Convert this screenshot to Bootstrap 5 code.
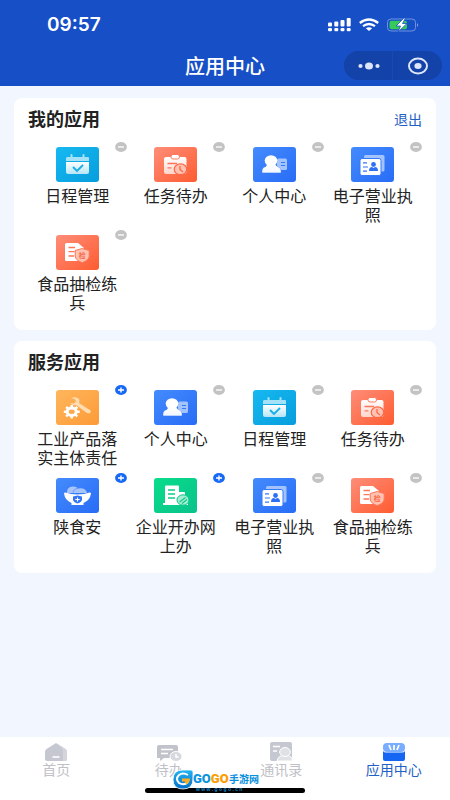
<!DOCTYPE html>
<html lang="zh-CN">
<head>
<meta charset="utf-8">
<meta name="viewport" content="width=device-width, initial-scale=1">
<title>应用中心</title>
<link href="https://cdn.jsdelivr.net/npm/bootstrap@5.3.0/dist/css/bootstrap.min.css" rel="stylesheet">
<style>
body{font-family:"Liberation Sans","Noto Sans CJK SC",sans-serif;background:#f2f6ff;color:#222}
.top-area{background:#174fc7;color:#fff;height:86px}
.status-row{padding:13px 31px 0 47px;height:37px}
.clock-text{font-family:Inter,sans-serif;font-size:19px;line-height:24px;font-weight:600}
.title-row{height:30px;margin-top:14px}
.page-title{font-size:20px;line-height:32px;font-weight:500}
.capsule{right:8px;top:0;width:98px;height:29px;background:#1342a9;border-radius:15px}
.capsule button{color:#dce5fb}
.capsule button+button{box-shadow:-1px 0 #174ab8}
.cards-wrap{padding:12px 14px;gap:11px}
.panel{border-radius:8px;padding:10px 14px 17px}
.panel-head{height:24px;margin-bottom:15px}
.panel-title{font-size:18px;line-height:24px;font-weight:700}
.exit-btn{font-size:14px;line-height:20px;color:#1f62c4}
.app-grid{row-gap:10px}
.app-link{padding:0 8px;color:#222}
.app-link svg{width:43px;height:35px}
.app-label{font-size:16px;line-height:19px;margin-top:5px}
.toggle-btn{top:-5px;right:0;width:12px;height:10px}
.toggle-btn svg{width:12px;height:10px}
.tab-bar{height:63px;padding-top:5px}
.tab-bar a{font-size:14px;line-height:16px;color:#c0c1c7}
.tab-bar a.active{color:#1f62c4}
.tab-bar svg{width:24px;height:20px}
.home-line{left:50%;bottom:7px;width:160px;height:5px;margin-left:-80px;background:#000}
.brand-mark{left:50%;bottom:8px;margin-left:-53px}
.brand-mark svg{width:88px;height:23px}
</style>
</head>
<body>
<svg class="position-absolute" width="0" height="0" aria-hidden="true">
  <defs>
    <linearGradient id="gCyan" x2="1" y2="1"><stop stop-color="#16b9f1"/><stop offset="1" stop-color="#079ddd"/></linearGradient>
    <linearGradient id="gRed" x2="1" y2="1"><stop stop-color="#ff8d79"/><stop offset="1" stop-color="#fe5c30"/></linearGradient>
    <linearGradient id="gBlue" x2="1" y2="1"><stop stop-color="#448bfd"/><stop offset="1" stop-color="#286cf6"/></linearGradient>
    <linearGradient id="gOrange" x2="1" y2="1"><stop stop-color="#ffb65c"/><stop offset="1" stop-color="#fd9a37"/></linearGradient>
    <linearGradient id="gGreen" x2="1" y2="1"><stop stop-color="#08dd8b"/><stop offset="1" stop-color="#0ac28b"/></linearGradient>
    <linearGradient id="gWhite" x2="0" y2="1"><stop stop-color="#fff"/><stop offset="1" stop-color="#fff" stop-opacity=".7"/></linearGradient>
    <linearGradient id="gLogo" x2="0" y2="1"><stop stop-color="#22b4f2"/><stop offset="1" stop-color="#0670c7"/></linearGradient>
    <linearGradient id="gGold" x2="0" y2="1"><stop stop-color="#ffc400"/><stop offset="1" stop-color="#ff7b00"/></linearGradient>
  </defs>
  <symbol id="calendar" viewBox="0 0 43 35">
    <rect width="43" height="35" rx="3" fill="url(#gCyan)"/>
    <path d="M12 10h20q1 0 1 1v3H10v-3q0-1 2-1Z" fill="#a5e2f8"/>
    <path d="M15.500 8v4M27.500 8v4" stroke="#a5e2f8" stroke-width="2" stroke-linecap="round"/>
    <path d="M10 15h23v10q0 2-2 2H12q-2 0-2-2Z" fill="url(#gWhite)"/>
    <path d="m17 20 4 4 6-6" fill="none" stroke="#17aee6" stroke-width="1.800"/>
  </symbol>
  <symbol id="task" viewBox="0 0 43 35">
    <rect width="43" height="35" rx="3" fill="url(#gRed)"/>
    <rect x="10" y="10" width="22.500" height="17" rx="2" fill="url(#gWhite)"/>
    <rect x="17" y="7.500" width="8.500" height="4.500" rx="2" fill="#fff" stroke="#fe7b60"/>
    <path d="M13.500 16.500H23M13.500 20.800h4" stroke="#fe7657" stroke-width="1.300"/>
    <ellipse cx="26.500" cy="22.300" rx="6.300" ry="5.400" fill="#ffc2b3" stroke="#fe6743" stroke-width="1.200"/>
    <path d="M26 19v3.500l3 2.500" fill="none" stroke="#fe6743" stroke-width="1.300"/>
  </symbol>
  <symbol id="person" viewBox="0 0 43 35">
    <rect width="43" height="35" rx="3" fill="url(#gBlue)"/>
    <rect x="24" y="11.500" width="10" height="11.500" rx="1.500" fill="#a3c3fd"/>
    <path d="M28 15.500h4M28 18.500h4" stroke="#3476f7"/>
    <path d="M14 17h8q1 2 3 3 3 1 3 5v1H9q0-5 3-6 2-1 2-3Z" fill="#d5e3ff" stroke="#367af9" stroke-width=".8"/>
    <ellipse cx="18" cy="13.600" rx="6.300" ry="5.400" fill="#fff"/>
    <path d="M14 17q4 3 8 0 1 3 4 3.500 2 1 2 5H9q0-4 2-5 3-.5 3-3.500Z" fill="url(#gWhite)"/>
  </symbol>
  <symbol id="license" viewBox="0 0 43 35">
    <rect width="43" height="35" rx="3" fill="url(#gBlue)"/>
    <rect x="13" y="8" width="20.500" height="16.500" rx="1.500" fill="#a3c3fd"/>
    <rect x="9" y="11.500" width="21" height="17" rx="2" fill="#fff" stroke="#357af9"/>
    <path d="M12 15.800h4M12 20h5M12 24.200h4" stroke="#3476f7" stroke-width="1.200"/>
    <circle cx="22.500" cy="17.500" r="2.400" fill="#2d70f4"/><path d="M18 24q0-4 3-4l1.500 1 1.500-1q3 0 3 4Z" fill="#2d70f4"/>
  </symbol>
  <symbol id="inspect" viewBox="0 0 43 35">
    <rect width="43" height="35" rx="3" fill="url(#gRed)"/>
    <path d="M10.500 8H22l6 5v13H10.500Q9 26 9 24.500v-15Q9 8 10.500 8Z" fill="#fff"/>
    <path d="M12.500 12.500H19M12.500 16.700h6M12.500 21H18" stroke="#fe7657" stroke-width="1.300"/>
    <path d="m26.200 13.500 7 2v5.500q0 4-7 6.700-7-2.700-7-6.700v-5.500Z" fill="#ffc2b3" stroke="#fe7455"/>
    <text x="26.200" y="23" font-size="7" font-weight="700" text-anchor="middle" fill="#f96845">检</text>
  </symbol>
  <symbol id="tools" viewBox="0 0 43 35">
    <rect width="43" height="35" rx="3" fill="url(#gOrange)"/>
    <path d="M15 8q5-2 8 1 1 2 0 4l11.500 7.500q1 2-1 3L31 23l-11-8q-4 1-6-2l4 .5 2-2.500-1.500-2Z" fill="#ffdcb2"/>
    <ellipse cx="15.700" cy="21.700" rx="4.500" ry="3.700" fill="none" stroke="#fff" stroke-width="3"/>
    <path d="M15.700 15v3M15.700 25.500v3M7.800 21.700h3M20.700 21.700h3M10.100 17l2 1.700M19.300 24.700l2 1.700M21.300 17l-2 1.700M12.100 24.700l-2 1.700" stroke="#fff" stroke-width="2.400"/>
  </symbol>
  <symbol id="bowl" viewBox="0 0 43 35">
    <rect width="43" height="35" rx="3" fill="url(#gBlue)"/>
    <path d="M11 14q0-5 5.500-5.500Q20 8 22 10.500q8-1 9 4.500H11Z" fill="#a7c4fb"/>
    <path d="M17 14.500q0-3.500 6-4.500" fill="none" stroke="#5b92f8" stroke-width=".8"/>
    <path d="M8 15.500q0-1 1.500-1 5 2 12 2t12-2q1.500 0 1.500 1-1 7-7.500 9.500V27h-12v-2Q9 22.500 8 15.500Z" fill="#fff"/>
    <path d="m21.500 17.500 4.500 1v3q0 2.500-4.500 4-4.500-1.500-4.500-4v-3Z" fill="#3476f6"/>
    <path d="M21.500 19.500v4M19.300 21.500h4.400" stroke="#fff" stroke-width="1.100"/>
  </symbol>
  <symbol id="building" viewBox="0 0 43 35">
    <rect width="43" height="35" rx="3" fill="url(#gGreen)"/>
    <path d="M12 7.500h12q1 0 1 1V14h5q1 0 1 1v10h3v2H9v-2h2V8.500q0-1 1-1Z" fill="#fff"/>
    <path d="M14 12h7M14 16h7M14 20h7" stroke="#0bce8a" stroke-width="1.500"/>
    <ellipse cx="29" cy="22" rx="6" ry="5.200" fill="#a4edd2" stroke="#0bc98a"/>
    <path d="m25.500 24 6-4.500M28 25.500l5-4" stroke="#0bc98a" stroke-width="1.100"/>
  </symbol>
  <symbol id="minus" viewBox="0 0 12 10"><ellipse cx="6" cy="5" rx="5.900" ry="4.900" fill="#c3c3c3"/><path d="M3 5h6" stroke="#fff" stroke-width="1.300"/></symbol>
  <symbol id="plus" viewBox="0 0 12 10"><ellipse cx="6" cy="5" rx="5.900" ry="4.900" fill="#1769f5"/><path d="M3 5h6M6 2.400v5.200" stroke="#fff" stroke-width="1.400"/></symbol>
</svg>

<div class="d-flex flex-column min-vh-100 position-relative">
  <header class="top-area">
    <div class="status-row d-flex justify-content-between">
      <span class="clock-text">09:57</span>
      <svg width="91" height="24" viewBox="0 0 91 24" aria-label="信号、无线网络、电池">
        <g fill="#fff"><rect x="0" y="9.500" width="4" height="4" rx="1"/><rect x="6.300" y="8.500" width="4" height="5" rx="1"/><rect x="12.500" y="7" width="4" height="6.500" rx="1"/><rect x="18.700" y="5" width="4" height="8.500" rx="1"/><rect x="0" y="15" width="4" height="3.200" rx="1.200"/><rect x="6.300" y="15" width="4" height="3.200" rx="1.200"/><rect x="12.500" y="15" width="4" height="3.200" rx="1.200"/><rect x="18.700" y="15" width="4" height="3.200" rx="1.200"/></g>
        <g fill="none" stroke="#fff" stroke-width="2.300"><path d="M31.800 10q9.200-7 18.400 0M35 13.200q6-4.500 12 0"/></g><path d="M37.800 15.300q3.200-2 6.400 0L41 18Z" fill="#fff"/>
        <rect x="59.500" y="6" width="28" height="12" rx="3.500" fill="none" stroke="#6f94df"/><path d="M89 10q2 2 0 4Z" fill="#8eabe7"/>
        <rect x="61.500" y="7.800" width="17.500" height="8.400" rx="2" fill="#35ca5a"/>
        <path d="m76 5-8 8h4.500L70 19l9-8.500h-4.500L77.500 5Z" fill="#fff" stroke="#174fc7" stroke-width=".8"/>
      </svg>
    </div>
    <div class="title-row position-relative">
      <h1 class="page-title text-center m-0">应用中心</h1>
      <div class="capsule position-absolute d-flex overflow-hidden">
        <button type="button" class="border-0 bg-transparent p-0 w-50" aria-label="更多"><svg class="d-block mx-auto" width="24" height="10" viewBox="0 0 24 10" fill="currentColor"><circle cx="3.500" cy="5" r="2.100"/><ellipse cx="12" cy="5" rx="4" ry="3.500"/><circle cx="20.500" cy="5" r="2.100"/></svg></button>
        <button type="button" class="border-0 bg-transparent p-0 w-50" aria-label="关闭"><svg class="d-block mx-auto" width="22" height="18" viewBox="0 0 22 18"><ellipse cx="11" cy="9" rx="9" ry="7.500" fill="none" stroke="currentColor" stroke-width="2"/><ellipse cx="11" cy="9" rx="3.600" ry="3" fill="currentColor"/></svg></button>
      </div>
    </div>
  </header>

  <main class="cards-wrap flex-grow-1 d-flex flex-column">
    <section class="panel bg-white">
      <div class="panel-head d-flex justify-content-between align-items-center">
        <h2 class="panel-title m-0">我的应用</h2>
        <button type="button" class="exit-btn border-0 bg-transparent p-0">退出</button>
      </div>
      <ul class="app-grid row gx-0 list-unstyled m-0">
        <li class="col-3 position-relative"><a href="#" class="app-link d-flex flex-column align-items-center text-center text-decoration-none"><svg aria-hidden="true"><use href="#calendar"/></svg><span class="app-label">日程管理</span></a><button type="button" class="toggle-btn position-absolute border-0 bg-transparent p-0 d-flex" aria-label="移除日程管理"><svg><use href="#minus"/></svg></button></li>
        <li class="col-3 position-relative"><a href="#" class="app-link d-flex flex-column align-items-center text-center text-decoration-none"><svg aria-hidden="true"><use href="#task"/></svg><span class="app-label">任务待办</span></a><button type="button" class="toggle-btn position-absolute border-0 bg-transparent p-0 d-flex" aria-label="移除任务待办"><svg><use href="#minus"/></svg></button></li>
        <li class="col-3 position-relative"><a href="#" class="app-link d-flex flex-column align-items-center text-center text-decoration-none"><svg aria-hidden="true"><use href="#person"/></svg><span class="app-label">个人中心</span></a><button type="button" class="toggle-btn position-absolute border-0 bg-transparent p-0 d-flex" aria-label="移除个人中心"><svg><use href="#minus"/></svg></button></li>
        <li class="col-3 position-relative"><a href="#" class="app-link d-flex flex-column align-items-center text-center text-decoration-none"><svg aria-hidden="true"><use href="#license"/></svg><span class="app-label">电子营业执照</span></a><button type="button" class="toggle-btn position-absolute border-0 bg-transparent p-0 d-flex" aria-label="移除电子营业执照"><svg><use href="#minus"/></svg></button></li>
        <li class="col-3 position-relative"><a href="#" class="app-link d-flex flex-column align-items-center text-center text-decoration-none"><svg aria-hidden="true"><use href="#inspect"/></svg><span class="app-label">食品抽检练兵</span></a><button type="button" class="toggle-btn position-absolute border-0 bg-transparent p-0 d-flex" aria-label="移除食品抽检练兵"><svg><use href="#minus"/></svg></button></li>
      </ul>
    </section>
    <section class="panel bg-white">
      <div class="panel-head d-flex align-items-center">
        <h2 class="panel-title m-0">服务应用</h2>
      </div>
      <ul class="app-grid row gx-0 list-unstyled m-0">
        <li class="col-3 position-relative"><a href="#" class="app-link d-flex flex-column align-items-center text-center text-decoration-none"><svg aria-hidden="true"><use href="#tools"/></svg><span class="app-label">工业产品落实主体责任</span></a><button type="button" class="toggle-btn position-absolute border-0 bg-transparent p-0 d-flex" aria-label="添加工业产品落实主体责任"><svg><use href="#plus"/></svg></button></li>
        <li class="col-3 position-relative"><a href="#" class="app-link d-flex flex-column align-items-center text-center text-decoration-none"><svg aria-hidden="true"><use href="#person"/></svg><span class="app-label">个人中心</span></a><button type="button" class="toggle-btn position-absolute border-0 bg-transparent p-0 d-flex" aria-label="移除个人中心"><svg><use href="#minus"/></svg></button></li>
        <li class="col-3 position-relative"><a href="#" class="app-link d-flex flex-column align-items-center text-center text-decoration-none"><svg aria-hidden="true"><use href="#calendar"/></svg><span class="app-label">日程管理</span></a><button type="button" class="toggle-btn position-absolute border-0 bg-transparent p-0 d-flex" aria-label="移除日程管理"><svg><use href="#minus"/></svg></button></li>
        <li class="col-3 position-relative"><a href="#" class="app-link d-flex flex-column align-items-center text-center text-decoration-none"><svg aria-hidden="true"><use href="#task"/></svg><span class="app-label">任务待办</span></a><button type="button" class="toggle-btn position-absolute border-0 bg-transparent p-0 d-flex" aria-label="移除任务待办"><svg><use href="#minus"/></svg></button></li>
        <li class="col-3 position-relative"><a href="#" class="app-link d-flex flex-column align-items-center text-center text-decoration-none"><svg aria-hidden="true"><use href="#bowl"/></svg><span class="app-label">陕食安</span></a><button type="button" class="toggle-btn position-absolute border-0 bg-transparent p-0 d-flex" aria-label="添加陕食安"><svg><use href="#plus"/></svg></button></li>
        <li class="col-3 position-relative"><a href="#" class="app-link d-flex flex-column align-items-center text-center text-decoration-none"><svg aria-hidden="true"><use href="#building"/></svg><span class="app-label">企业开办网上办</span></a><button type="button" class="toggle-btn position-absolute border-0 bg-transparent p-0 d-flex" aria-label="添加企业开办网上办"><svg><use href="#plus"/></svg></button></li>
        <li class="col-3 position-relative"><a href="#" class="app-link d-flex flex-column align-items-center text-center text-decoration-none"><svg aria-hidden="true"><use href="#license"/></svg><span class="app-label">电子营业执照</span></a><button type="button" class="toggle-btn position-absolute border-0 bg-transparent p-0 d-flex" aria-label="移除电子营业执照"><svg><use href="#minus"/></svg></button></li>
        <li class="col-3 position-relative"><a href="#" class="app-link d-flex flex-column align-items-center text-center text-decoration-none"><svg aria-hidden="true"><use href="#inspect"/></svg><span class="app-label">食品抽检练兵</span></a><button type="button" class="toggle-btn position-absolute border-0 bg-transparent p-0 d-flex" aria-label="移除食品抽检练兵"><svg><use href="#minus"/></svg></button></li>
      </ul>
    </section>
  </main>

  <nav class="tab-bar bg-white d-flex" aria-label="主导航">
    <a href="#" class="col-3 d-flex flex-column align-items-center text-decoration-none"><svg viewBox="0 0 24 20"><path d="m12 1 9.500 6q1.500 1 1.500 3v7q0 2-2 2H3q-2 0-2-2v-7q0-2 1.500-3Z" fill="#c5c8d0"/><path d="m12 1 9.500 6q1.500 1 1.500 3v7q0 2-2 2h-2V7Z" fill="#d4d6dc"/><path d="M8.500 15h7" stroke="#fff" stroke-width="1.600"/></svg>首页</a>
    <a href="#" class="col-3 d-flex flex-column align-items-center text-decoration-none"><svg viewBox="0 0 24 20" class="overflow-visible"><path d="M2 3h17q2 0 2 2v11H7l-4 3v-3H0V5q0-2 2-2Z" fill="#c0c3ca"/><path d="M4 7.500h12M4 11.500h7" stroke="#fff" stroke-width="1.500"/><ellipse cx="19" cy="14.500" rx="6" ry="5" fill="#d7d9de" stroke="#fff"/><path d="M19 12v3h2.500" fill="none" stroke="#fff" stroke-width="1.500"/></svg>待办</a>
    <a href="#" class="col-3 d-flex flex-column align-items-center text-decoration-none"><svg viewBox="0 0 24 20"><rect x="1" y="0" width="22" height="19" rx="2" fill="#c5c8d0"/><path d="M4 4.500h7M4 9h4" stroke="#fff" stroke-width="1.300"/><path d="M12.500 13.500q3.500 2 7 0 4 1.500 4.500 5.500H8q.5-4 4.500-5.500Z" fill="#dfe1e5" stroke="#fff"/><ellipse cx="16" cy="10" rx="5.300" ry="4.500" fill="#dfe1e5" stroke="#fff"/></svg>通讯录</a>
    <a href="#" class="col-3 active d-flex flex-column align-items-center text-decoration-none" aria-current="page"><svg viewBox="0 0 24 20"><rect x="1" y="1" width="22" height="9" rx="4" fill="#79adff"/><path d="m7 3 2 5M12 3v5M17 3l-2 5" stroke="#fff" stroke-width="1.700"/><path d="M1 9q1 1.500 3 1.500h16q2 0 3-1.500v8q0 2-2 2H3q-2 0-2-2Z" fill="#1466f3"/></svg>应用中心</a>
  </nav>
  <div class="home-line position-absolute rounded-pill"></div>
  <div class="brand-mark position-absolute d-flex" aria-label="GOGO手游网">
    <svg viewBox="0 0 88 23">
      <path d="M11 1h8q2 0 2 2v7q0 10-10 10T1 10.500 11 1Z" fill="url(#gLogo)" stroke="#fff" stroke-width=".8"/>
      <path d="M16 6q-5-3-9 0-4 4 0 8 5 3 9-1" fill="none" stroke="#fff" stroke-width="2"/><path d="M10 9.500h8q0 4-4 6l-1-3h-3Z" fill="#ffad20"/>
      <text x="21" y="14" font-family="Roboto,sans-serif" font-size="13" font-weight="900" stroke="#fff" stroke-width="1.500" paint-order="stroke"><tspan fill="#0d93df">GO</tspan><tspan fill="#ff9c00">GO</tspan></text>
      <text x="57" y="14" font-family="'Noto Sans CJK SC',sans-serif" font-size="10" font-weight="700" fill="#0790dd" stroke="#fff" stroke-width="1" paint-order="stroke">手游网</text>
      <text x="24" y="22" font-family="'Liberation Sans',sans-serif" font-size="5" font-weight="700" fill="#1687c6">w w w . g o g o . c n</text>
    </svg>
  </div>
</div>
<script src="https://cdn.jsdelivr.net/npm/bootstrap@5.3.0/dist/js/bootstrap.bundle.min.js"></script>
</body>
</html>
